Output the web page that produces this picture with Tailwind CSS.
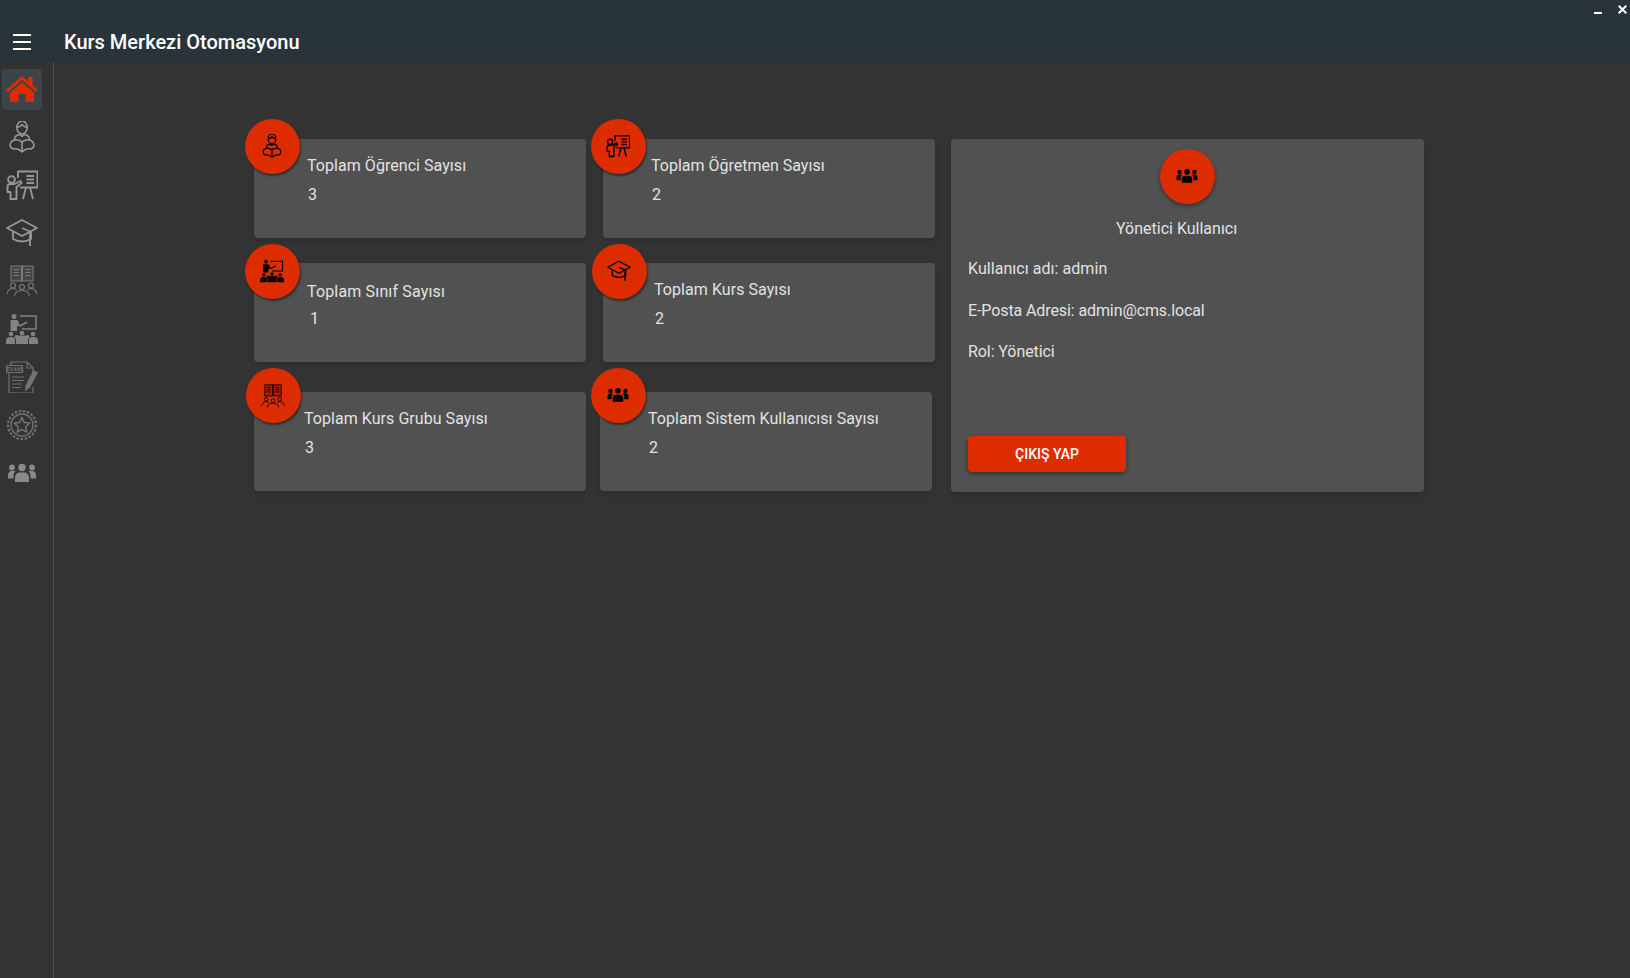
<!DOCTYPE html>
<html lang="en">
<head>
  <meta charset="UTF-8" />
  <title>Kurs Merkezi Otomasyonu</title>
  <script src="https://cdn.jsdelivr.net/npm/@tailwindcss/browser@4"></script>
</head>
<body class="bg-[#333333] text-[#e2e2e2] font-['Roboto',sans-serif] h-screen overflow-hidden flex flex-col">
  <!-- icon set -->
  <svg class="hidden" xmlns="http://www.w3.org/2000/svg">
    <symbol id="i-home" viewBox="0 0 32 32">
      <path fill="currentColor" d="M16 3 22 8.200V4h4.500v8l5.500 5-2 2L16 7 2 19l-2-2Z"/>
      <path fill="currentColor" d="M16 9.500 28 19.500V29h-8.500v-8h-7v8H4v-9.500Z"/>
    </symbol>
    <symbol id="i-student" viewBox="0 0 32 32">
      <g fill="none" stroke="currentColor" stroke-width="1.600" stroke-linejoin="round">
        <ellipse cx="16" cy="6.500" rx="5.200" ry="6.500"/>
        <path d="M10.800 6.500q3.200-.5 5.200-3 2 2.500 5.200 3"/>
        <path d="M8.500 20v-1q0-5 5.500-5.500l2 2 2-2q5.500.5 5.500 5.500v1"/>
        <path d="M16 21q-5-3.500-9-1.500-3 2-3 4.500t3 4q5-1 9 3 4-4 9-3 3-1.500 3-4t-3-4.500q-4-2-9 1.500ZM16 21v10"/>
      </g>
    </symbol>
    <symbol id="i-teacher" viewBox="0 0 32 32">
      <g fill="none" stroke="currentColor" stroke-width="1.900" stroke-linejoin="round">
        <circle cx="5.500" cy="10.500" r="3.400"/>
        <path d="M1.500 21v-3q0-3 3-3h4l6-3 1 2-5 4v12H4.500v-7H1.500Z"/>
        <path d="M12 9V2.500h19.500v16H14"/>
        <path d="M20.500 7h7.500M20.500 10.500h7.500M20.500 14h7.500"/>
        <path d="M20 18.500l-3 11.500M24 18.500l3 11.500"/>
      </g>
    </symbol>
    <symbol id="i-cap" viewBox="0 0 32 32">
      <g fill="none" stroke="currentColor" stroke-width="1.800" stroke-linejoin="round">
        <path d="M16 3 31 11 16 19 1 11Z"/>
        <path d="M7 15v7q9 5 18 0v-7"/>
        <path d="M16 11l8 3.500V29"/>
      </g>
    </symbol>
    <symbol id="i-group" viewBox="0 0 32 32">
      <path fill="currentColor" fill-opacity=".25" d="M5 1h10.500v15H5ZM16.500 1H27v15H16.500Z"/>
      <g fill="none" stroke="currentColor" stroke-width="1.100">
        <path d="M5 1h10.500v15H5ZM16.500 1H27v15H16.500Z"/>
        <path d="M7.500 4.500h5.500M7.500 7.500h5.500M7.500 10.500h5.500M19 4.500h5.500M19 7.500h5.500M19 10.500h5.500"/>
        <circle cx="7" cy="20.500" r="2.500"/>
        <circle cx="16" cy="22" r="2.500"/>
        <circle cx="25" cy="20.500" r="2.500"/>
        <path d="M1 29q1-5.500 6-5.500 2.500 0 3.500 1.500M8.500 31q1-5.500 7.500-5.500t7.500 5.500M21.500 25q1-1.500 3.500-1.500 5 0 6 5.500"/>
      </g>
    </symbol>
    <symbol id="i-class" viewBox="0 0 32 32">
      <path fill="none" stroke="currentColor" stroke-width="1.500" d="M14 3h16v13H16M14 13l7-4"/>
      <g fill="currentColor">
        <circle cx="8" cy="3.500" r="2.500"/>
        <path d="M4.500 7h7l2 4 .5 2-3 .5V18h-6.500Z"/>
        <circle cx="5" cy="21" r="2.300"/><circle cx="16" cy="20" r="2.300"/><circle cx="27" cy="21" r="2.300"/>
        <circle cx="10.500" cy="24" r="2"/><circle cx="21.500" cy="24" r="2"/>
        <path d="M0 31v-3q0-4 4-4h2q2 0 3 2v5ZM10 31v-4q0-4 3-4.500h6q3 .5 3 4.500v4ZM23 31v-5q1-2 3-2h2q4 0 4 4v3Z"/>
      </g>
    </symbol>
    <symbol id="i-exam" viewBox="0 0 32 32">
      <g fill="none" stroke="currentColor" stroke-width="1.200" stroke-linejoin="round">
        <path d="M5 4.500V1h16l6 6v5M27 26v6H3V11.500"/>
        <path d="M21 1v6h6"/>
        <rect x="0.500" y="4.500" width="16" height="7"/>
        <path d="M6 16h12M6 19.500h12M6 23h10M6 26.500h9"/>
      </g>
      <text x="8.500" y="9.800" text-anchor="middle" font-family="Roboto" font-size="5" font-weight="700" letter-spacing=".4" fill="currentColor">EXAM</text>
      <path fill="currentColor" d="M27.500 9l4.500 2.500-8 15-5 4 .5-6Z"/>
    </symbol>
    <symbol id="i-badge" viewBox="0 0 32 32">
      <g fill="none" stroke="currentColor">
        <circle cx="16" cy="16" r="14" stroke-width="2.200" stroke-dasharray="2.500 1.650"/>
        <circle cx="16" cy="16" r="11" stroke-width="1.300"/>
        <path stroke-width="1.500" stroke-linejoin="round" d="M16 8.500l2.300 4.900 5.300.7-3.900 3.600 1 5.300-4.700-2.600-4.700 2.600 1-5.300-3.900-3.600 5.300-.7Z"/>
      </g>
    </symbol>
    <symbol id="i-users" viewBox="0 0 32 32">
      <g fill="currentColor">
        <circle cx="16" cy="10.500" r="3.700"/>
        <circle cx="6" cy="10.500" r="2.900"/>
        <circle cx="26" cy="10.500" r="2.900"/>
        <path d="M9 25v-4q0-5.500 5-5.500h4q5 0 5 5.500v4Z"/>
        <path d="M2 21.500v-3q0-4.500 4-4.500h3.500q-2 2-2 6v1.500ZM30 21.500v-3q0-4.500-4-4.500h-3.500q2 2 2 6v1.500Z"/>
      </g>
    </symbol>
  </svg>

  <header class="h-[62px] shrink-0 bg-[#29333a] flex flex-col">
    <div class="h-[26px] flex justify-end items-start pr-[3px] pt-[5px] gap-[16px]">
      <div class="w-[8px] h-[2px] mt-[7px] bg-white"></div>
      <svg class="w-[9px] h-[9px]" viewBox="0 0 9 9"><path d="M.7.7l7.600 7.600M8.300.7.700 8.300" stroke="#fff" stroke-width="2" fill="none"/></svg>
    </div>
    <div class="flex items-center h-[32px]">
      <div class="ml-[13px] w-[18px] flex flex-col gap-[5px]">
        <div class="h-[2px] bg-white"></div>
        <div class="h-[2px] bg-white"></div>
        <div class="h-[2px] bg-white"></div>
      </div>
      <h1 class="ml-[33px] text-[20px] font-medium text-white">Kurs Merkezi Otomasyonu</h1>
    </div>
  </header>

  <div class="flex-1 flex min-h-0">
    <aside class="w-[54px] shrink-0 border-r border-[#4e4e4e] pt-[7px] pl-[2px] flex flex-col gap-[7px]">
      <a class="w-[40px] h-[41px] rounded-[4px] bg-[#3d4449] flex items-center justify-center text-[#dd2c00]"><svg class="w-[32px] h-[32px] -translate-y-px"><use href="#i-home"/></svg></a>
      <a class="w-[40px] h-[41px] flex items-center justify-center text-[#979797]"><svg class="w-[32px] h-[32px] -translate-y-px"><use href="#i-student"/></svg></a>
      <a class="w-[40px] h-[41px] flex items-center justify-center text-[#979797]"><svg class="w-[32px] h-[32px] -translate-y-px"><use href="#i-teacher"/></svg></a>
      <a class="w-[40px] h-[41px] flex items-center justify-center text-[#979797]"><svg class="w-[32px] h-[32px] -translate-y-px"><use href="#i-cap"/></svg></a>
      <a class="w-[40px] h-[41px] flex items-center justify-center text-[#7a7a7a]"><svg class="w-[32px] h-[32px] -translate-y-px"><use href="#i-group"/></svg></a>
      <a class="w-[40px] h-[41px] flex items-center justify-center text-[#828282]"><svg class="w-[32px] h-[32px] -translate-y-px"><use href="#i-class"/></svg></a>
      <a class="w-[40px] h-[41px] flex items-center justify-center text-[#727272]"><svg class="w-[32px] h-[32px] -translate-y-px"><use href="#i-exam"/></svg></a>
      <a class="w-[40px] h-[41px] flex items-center justify-center text-[#727272]"><svg class="w-[32px] h-[32px] -translate-y-px"><use href="#i-badge"/></svg></a>
      <a class="w-[40px] h-[41px] flex items-center justify-center text-[#8a8a8a]"><svg class="w-[32px] h-[32px] -translate-y-px"><use href="#i-users"/></svg></a>
    </aside>

    <main class="flex-1 pt-[77px] pl-[200px] flex items-start">
      <div class="w-[681px] flex flex-col">
        <div class="flex gap-[17px]">
          <div class="relative w-[332px] h-[99px] bg-[#515151] rounded-[4px] shadow-md pl-[53px] pt-[17px]">
            <div class="absolute left-[-9.5px] top-[-20px] w-[55px] h-[55px] rounded-full bg-[#dd2c00] shadow-[1px_2px_2px_rgba(0,0,0,.45)] flex items-center justify-center text-black"><svg class="w-[24px] h-[24px] -translate-y-px"><use href="#i-student"/></svg></div>
            <div class="leading-[19px] tracking-[.05px]">Toplam Öğrenci Sayısı</div>
            <div class="leading-[19px] mt-[10px] ml-[1px]">3</div>
          </div>
          <div class="relative w-[332px] h-[99px] bg-[#515151] rounded-[4px] shadow-md pl-[48px] pt-[17px]">
            <div class="absolute left-[-12.5px] top-[-20px] w-[55px] h-[55px] rounded-full bg-[#dd2c00] shadow-[1px_2px_2px_rgba(0,0,0,.45)] flex items-center justify-center text-black"><svg class="w-[24px] h-[24px] -translate-y-px"><use href="#i-teacher"/></svg></div>
            <div class="leading-[19px]">Toplam Öğretmen Sayısı</div>
            <div class="leading-[19px] mt-[10px] ml-[1px]">2</div>
          </div>
        </div>
        <div class="flex gap-[17px] mt-[25px]">
          <div class="relative w-[332px] h-[99px] bg-[#515151] rounded-[4px] shadow-md pl-[53px] pt-[19px]">
            <div class="absolute left-[-9.5px] top-[-19px] w-[55px] h-[55px] rounded-full bg-[#dd2c00] shadow-[1px_2px_2px_rgba(0,0,0,.45)] flex items-center justify-center text-black"><svg class="w-[24px] h-[24px] -translate-y-px"><use href="#i-class"/></svg></div>
            <div class="leading-[19px] tracking-[.16px]">Toplam Sınıf Sayısı</div>
            <div class="leading-[19px] mt-[8px] ml-[3px]">1</div>
          </div>
          <div class="relative w-[332px] h-[99px] bg-[#515151] rounded-[4px] shadow-md pl-[51px] pt-[17px]">
            <div class="absolute left-[-11.5px] top-[-19px] w-[55px] h-[55px] rounded-full bg-[#dd2c00] shadow-[1px_2px_2px_rgba(0,0,0,.45)] flex items-center justify-center text-black"><svg class="w-[24px] h-[24px] -translate-y-px"><use href="#i-cap"/></svg></div>
            <div class="leading-[19px] tracking-[.06px]">Toplam Kurs Sayısı</div>
            <div class="leading-[19px] mt-[10px] ml-[1px]">2</div>
          </div>
        </div>
        <div class="flex gap-[14px] mt-[30px]">
          <div class="relative w-[332px] h-[99px] bg-[#515151] rounded-[4px] shadow-md pl-[50px] pt-[17px]">
            <div class="absolute left-[-8.5px] top-[-24px] w-[55px] h-[55px] rounded-full bg-[#dd2c00] shadow-[1px_2px_2px_rgba(0,0,0,.45)] flex items-center justify-center text-black"><svg class="w-[24px] h-[24px]"><use href="#i-group"/></svg></div>
            <div class="leading-[19px] tracking-[.05px]">Toplam Kurs Grubu Sayısı</div>
            <div class="leading-[19px] mt-[10px] ml-[1px]">3</div>
          </div>
          <div class="relative w-[332px] h-[99px] bg-[#515151] rounded-[4px] shadow-md pl-[48px] pt-[17px]">
            <div class="absolute left-[-9.5px] top-[-24px] w-[55px] h-[55px] rounded-full bg-[#dd2c00] shadow-[1px_2px_2px_rgba(0,0,0,.45)] flex items-center justify-center text-black"><svg class="w-[24px] h-[24px] -translate-y-px"><use href="#i-users"/></svg></div>
            <div class="leading-[19px] tracking-[.05px]">Toplam Sistem Kullanıcısı Sayısı</div>
            <div class="leading-[19px] mt-[10px] ml-[1px]">2</div>
          </div>
        </div>
      </div>

      <section class="ml-[16px] w-[473px] h-[353px] bg-[#515151] rounded-[4px] shadow-md pt-[10px] px-[17px] flex flex-col">
        <div class="self-center mr-[1px] w-[55px] h-[55px] rounded-full bg-[#dd2c00] shadow-[0_2px_4px_rgba(0,0,0,.4)] flex items-center justify-center text-black"><svg class="w-[24px] h-[24px] -translate-y-px"><use href="#i-users"/></svg></div>
        <div class="leading-[19px] mt-[15px] ml-[148px]">Yönetici Kullanıcı</div>
        <div class="leading-[19px] mt-[21px] tracking-[.05px]">Kullanıcı adı: admin</div>
        <div class="leading-[19px] mt-[23px] tracking-[-.1px]">E-Posta Adresi: admin@cms.local</div>
        <div class="leading-[19px] mt-[22px] tracking-[-.08px]">Rol: Yönetici</div>
        <button class="mt-[75px] w-[158px] h-[36px] rounded-[4px] bg-[#dd2c00] text-white text-[14px] font-medium shadow-[0_2px_4px_rgba(0,0,0,.4)]">ÇIKIŞ YAP</button>
      </section>
    </main>
  </div>
</body>
</html>
